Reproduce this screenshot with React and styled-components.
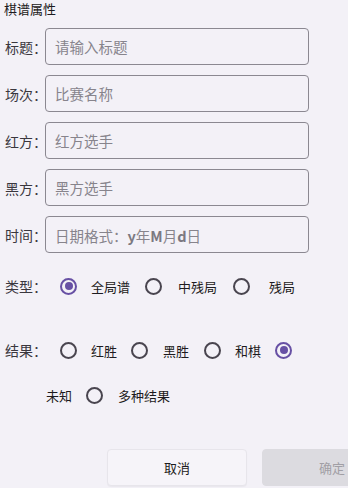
import React, { useState } from 'react';
import styled, { createGlobalStyle } from 'styled-components';

const GlobalStyle = createGlobalStyle`
  html, body {
    margin: 0;
    padding: 0;
    background: #f3f1f7;
    overflow: hidden;
  }
  body {
    font-family: "Noto Sans CJK SC", "Noto Sans", sans-serif;
    color: #1d1b20;
  }
`;

const Page = styled.div`
  width: 348px;
  height: 488px;
  display: flex;
  flex-direction: column;
`;

const Title = styled.div`
  font-size: 13px;
  line-height: 18px;
  padding: 0 0 0 4px;
  height: 20px;
  color: #1d1b20;
`;

const Fields = styled.div`
  display: flex;
  flex-direction: column;
  gap: 10px;
  margin-top: 8px;
`;

const FieldRow = styled.div`
  display: flex;
  align-items: center;
  height: 37px;
`;

const Label = styled.span`
  width: 45px;
  padding-left: 5px;
  box-sizing: border-box;
  font-size: 14px;
  white-space: nowrap;
  color: #3a373e;
`;

const InputWrap = styled.div`
  position: relative;
  width: 264px;
  height: 37px;
`;

const Input = styled.input`
  width: 100%;
  height: 100%;
  box-sizing: border-box;
  border: 1px solid #8b8891;
  border-radius: 4px;
  background: transparent;
  padding: 0 9px;
  font-family: inherit;
  font-size: 14.5px;
  color: #1d1b20;
  outline: none;

  &::placeholder {
    color: #87848c;
  }
`;

/* custom hint laid over the empty input, since it mixes weights */
const Hint = styled.span`
  position: absolute;
  left: 10px;
  top: 50%;
  transform: translateY(-50%);
  font-size: 14.5px;
  color: #87848c;
  pointer-events: none;
  white-space: nowrap;

  b {
    font-weight: 700;
    color: #7c7981;
  }
`;

const RadioRow = styled.div`
  display: flex;
  align-items: center;
  height: 24px;
  margin-top: ${p => p.$top}px;
  padding-left: ${p => p.$indent || 0}px;
`;

const RadioLabel = styled.span`
  width: 60px;
  padding-left: 5px;
  box-sizing: border-box;
  font-size: 14px;
  color: #3a373e;
  white-space: nowrap;
`;

const Option = styled.label`
  display: flex;
  align-items: center;
  margin-right: ${p => p.$gap ?? 14}px;
  cursor: pointer;
`;

const Circle = styled.span`
  width: 17px;
  height: 17px;
  box-sizing: border-box;
  border-radius: 50%;
  border: 2px solid ${p => (p.$on ? '#6750a4' : '#49454f')};
  display: flex;
  align-items: center;
  justify-content: center;
  flex-shrink: 0;

  &::after {
    content: '';
    width: 8px;
    height: 8px;
    border-radius: 50%;
    background: #6750a4;
    display: ${p => (p.$on ? 'block' : 'none')};
  }
`;

const OptionText = styled.span`
  font-size: 13px;
  color: #1d1b20;
  margin-left: ${p => p.$pad ?? 14}px;
  white-space: nowrap;
`;

const Buttons = styled.div`
  display: flex;
  gap: 15px;
  padding-left: 107px;
  margin-top: auto;
  margin-bottom: 2px;
`;

const Button = styled.button`
  flex-shrink: 0;
  width: 140px;
  height: 37px;
  border-radius: 4px;
  font-family: inherit;
  font-size: 13px;
  border: 1px solid ${p => (p.disabled ? '#dcdbe0' : '#e7e5eb')};
  background: ${p => (p.disabled ? '#dcdbe0' : '#f6f4f9')};
  color: ${p => (p.disabled ? '#a19fa5' : '#1d1b20')};
  box-shadow: ${p => (p.disabled ? 'none' : '0 1px 1px rgba(0,0,0,0.04)')};
`;

const fields = [
  { label: '标题：', placeholder: '请输入标题' },
  { label: '场次：', placeholder: '比赛名称' },
  { label: '红方：', placeholder: '红方选手' },
  { label: '黑方：', placeholder: '黑方选手' },
];

export default function App() {
  const [type, setType] = useState('全局谱');
  const [result, setResult] = useState('未知');
  const [date, setDate] = useState('');

  const radio = (value, current, set, text, pad, gap) => (
    <Option $gap={gap} onClick={() => set(value)}>
      <Circle $on={current === value} />
      {text && <OptionText $pad={pad}>{text}</OptionText>}
    </Option>
  );

  return (
    <Page>
      <GlobalStyle />
      <Title>棋谱属性</Title>
      <Fields>
        {fields.map(f => (
          <FieldRow key={f.label}>
            <Label>{f.label}</Label>
            <InputWrap>
              <Input placeholder={f.placeholder} />
            </InputWrap>
          </FieldRow>
        ))}
        <FieldRow>
          <Label>时间：</Label>
          <InputWrap>
            <Input value={date} onChange={e => setDate(e.target.value)} />
            {!date && (
              <Hint>
                日期格式：<b>y</b>年<b>M</b>月<b>d</b>日
              </Hint>
            )}
          </InputWrap>
        </FieldRow>
      </Fields>

      <RadioRow $top={21}>
        <RadioLabel>类型：</RadioLabel>
        {radio('全局谱', type, setType, '全局谱', 14, 15)}
        {radio('中残局', type, setType, '中残局', 16, 16)}
        {radio('残局', type, setType, '残局', 19)}
      </RadioRow>

      <RadioRow $top={40}>
        <RadioLabel>结果：</RadioLabel>
        {radio('红胜', result, setResult, '红胜', 14, 14)}
        {radio('黑胜', result, setResult, '黑胜', 15, 15)}
        {radio('和棋', result, setResult, '和棋', 14, 14)}
        {radio('未知', result, setResult)}
      </RadioRow>

      <RadioRow $top={21} $indent={46}>
        <OptionText $pad={0} onClick={() => setResult('未知')}>未知</OptionText>
        <Option $gap={0} style={{ marginLeft: 14 }}>
          {radio('多种结果', result, setResult, '多种结果', 15, 0)}
        </Option>
      </RadioRow>

      <Buttons>
        <Button>取消</Button>
        <Button disabled>确定</Button>
      </Buttons>
    </Page>
  );
}
